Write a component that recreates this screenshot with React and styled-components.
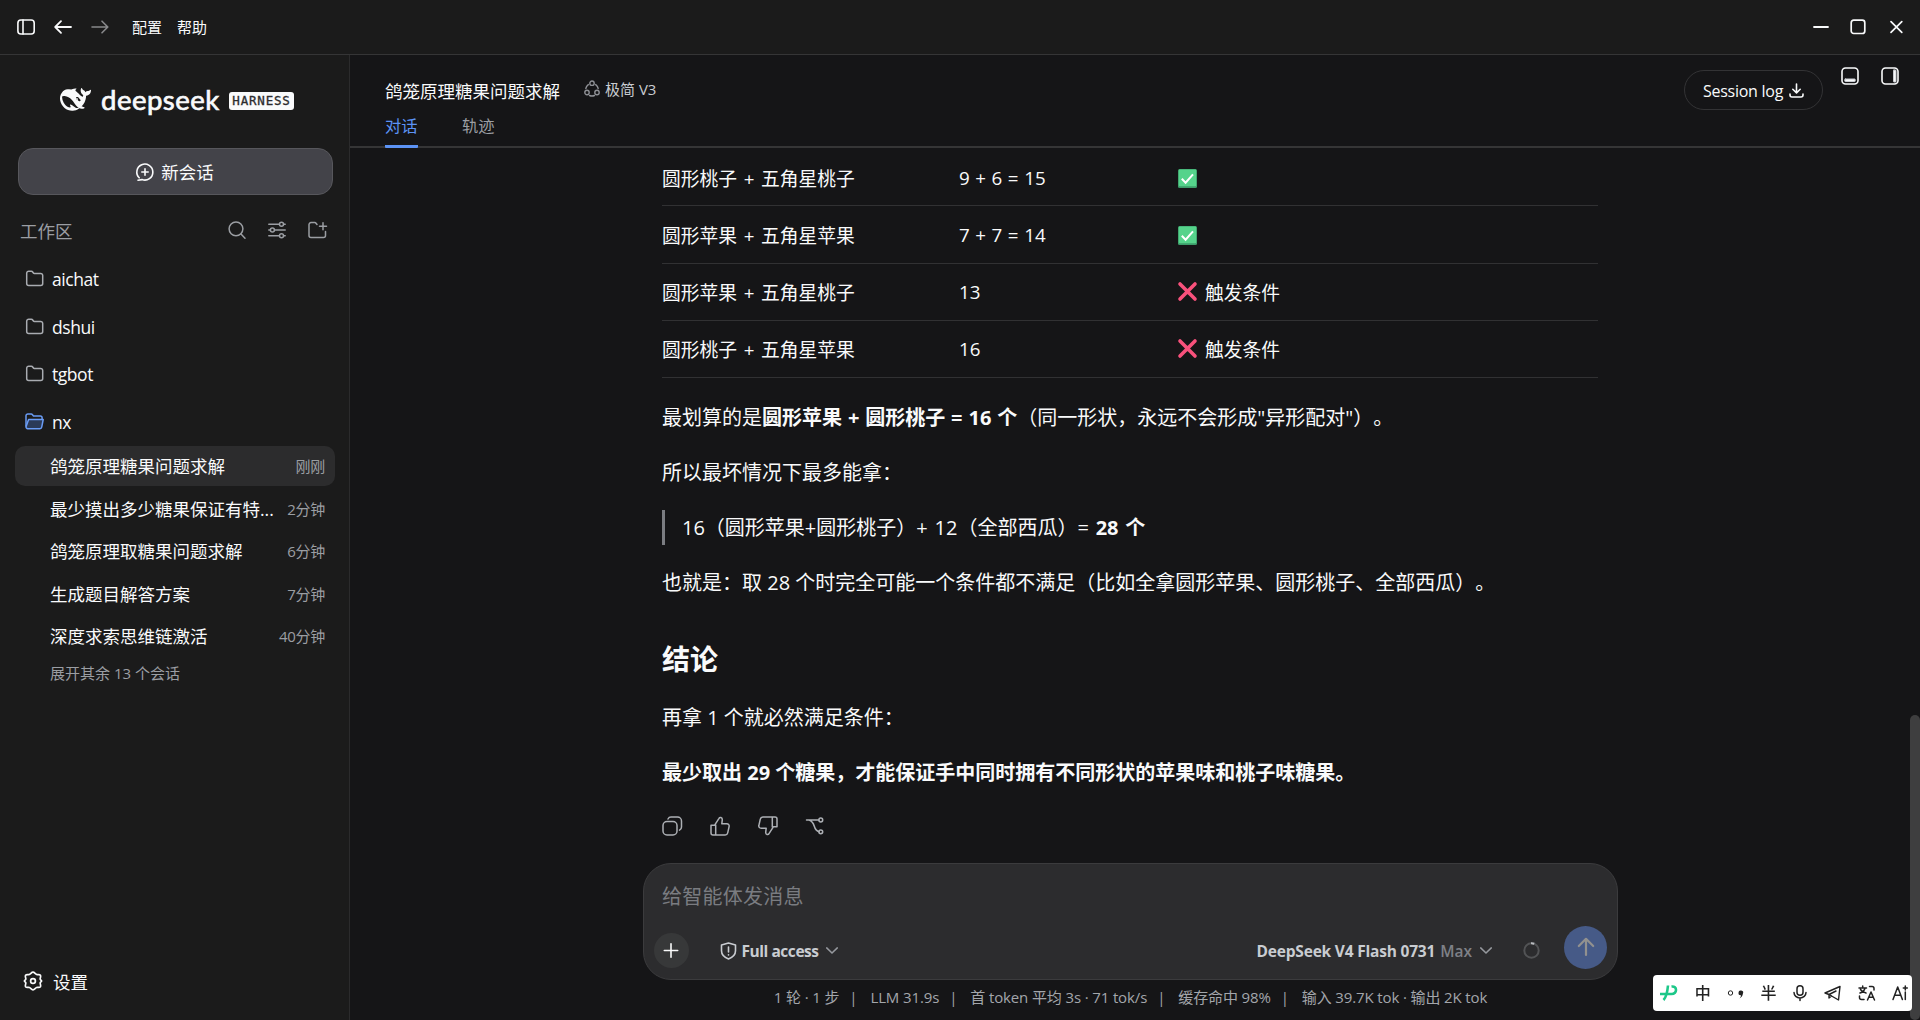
import React from "react";
import styled, { createGlobalStyle } from "styled-components";

const color = {
  main: "#151517",
  side: "#1b1b1b",
  line: "#353536",
  white: "#f9fafb",
  soft: "#c9ccd1",
  muted: "#9b9ea3",
  blue: "#5c93f5",
};

const GlobalStyle = createGlobalStyle`
  * {
    box-sizing: border-box;
  }

  body {
    margin: 0;
    background-color: ${color.main};
    color: ${color.white};
    font-family: "Open Sans", "Noto Sans CJK SC", sans-serif;
    font-size: 17.5px;
    text-spacing-trim: space-all;
    overflow: hidden;
  }

  svg {
    display: block;
    flex: none;
    overflow: visible;
  }
`;

const Window = styled.div`
  width: 1920px;
  height: 1020px;
  display: flex;
  flex-direction: column;
`;

const TitleBar = styled.header`
  height: 55px;
  flex: none;
  display: flex;
  align-items: center;
  padding: 0 17px;
  background-color: ${color.side};
  border-bottom: 1px solid ${color.line};
`;

const NavIcons = styled.div`
  display: flex;
  align-items: center;
  gap: 19px;
`;

const Menu = styled.nav`
  display: flex;
  gap: 15px;
  margin-left: 23px;
  font-size: 15px;
  line-height: 20px;
  flex: 1;
`;

const WindowButtons = styled.div`
  display: flex;
  align-items: center;
  gap: 21px;
`;

const Body = styled.div`
  flex: 1;
  min-height: 0;
  display: flex;
`;

const Sidebar = styled.aside`
  width: 350px;
  flex: none;
  display: flex;
  flex-direction: column;
  background-color: ${color.side};
  border-right: 1px solid #2b2b2c;
`;

const Brand = styled.div`
  height: 93px;
  flex: none;
  display: flex;
  align-items: center;
  padding: 0 0 4px 60px;
`;

const BrandName = styled.span`
  width: 120px;
  margin-left: 10px;
  font-family: Lato, sans-serif;
  font-size: 27.5px;
  line-height: 30px;
  letter-spacing: 0.5px;
  -webkit-text-stroke: 0.7px ${color.white};
`;

const BrandTag = styled.span`
  margin: 2px 0 0 8px;
  width: 65px;
  height: 18px;
  border-radius: 3px;
  background-color: ${color.white};
  color: #2b2b2d;
  font-family: "DejaVu Sans Mono", monospace;
  font-size: 12.5px;
  line-height: 18px;
  letter-spacing: 0.8px;
  text-align: center;
  -webkit-text-stroke: 0.3px #2b2b2d;
`;

const NewChat = styled.button`
  height: 47px;
  flex: none;
  margin: 0 16px 0 18px;
  padding: 0 1px 0 0;
  display: flex;
  align-items: center;
  justify-content: center;
  gap: 7px;
  background-color: #434349;
  border: 1px solid #57575c;
  border-radius: 15px;
  color: ${color.white};
  font: inherit;
`;

const WorkspaceHead = styled.div`
  height: 60px;
  flex: none;
  margin: 6px 0 -5.5px;
  padding: 0 22px 2px 20px;
  display: flex;
  align-items: center;
  gap: 22px;
  color: ${color.muted};

  span {
    flex: 1;
  }
`;

const Folder = styled.div`
  height: 47.5px;
  flex: none;
  padding-left: 25px;
  display: flex;
  align-items: center;
  gap: 8px;
  letter-spacing: -0.45px;

  svg {
    margin-bottom: 1px;
  }
`;

const Session = styled.div`
  height: 40px;
  flex: none;
  margin: 0 14px 2.5px 15px;
  padding: 0 10px 0 35px;
  display: flex;
  align-items: center;
  justify-content: space-between;
  border-radius: 10px;
  background-color: ${(props) => (props.$active ? "#2c2c2d" : "transparent")};
`;

const SessionTime = styled.span`
  color: ${color.muted};
  font-size: 15px;
  letter-spacing: -0.3px;
`;

const MoreSessions = styled.div`
  padding: 5px 0 0 50px;
  flex: 1;
  color: ${color.muted};
  font-size: 15px;
  line-height: 20px;
`;

const Settings = styled.div`
  height: 78px;
  flex: none;
  padding-left: 23px;
  display: flex;
  align-items: center;
  gap: 10px;
`;

const Main = styled.main`
  flex: 1;
  min-width: 0;
  display: flex;
  flex-direction: column;
`;

const ChatHeader = styled.div`
  height: 93px;
  flex: none;
  padding-left: 35px;
  display: flex;
  border-bottom: 2px solid ${color.line};
`;

const HeaderInfo = styled.div`
  flex: 1;
  display: flex;
  flex-direction: column;
  justify-content: space-between;
`;

const TitleRow = styled.div`
  height: 36px;
  margin-top: 17px;
  display: flex;
  align-items: center;
`;

const AgentTag = styled.span`
  margin: 0 0 4px 24px;
  display: flex;
  align-items: center;
  gap: 5px;
  color: ${color.soft};
  font-size: 15px;
`;

const Tabs = styled.div`
  display: flex;
  gap: 44px;
  margin-bottom: -2px;
`;

const Tab = styled.span`
  height: 34px;
  width: 33px;
  font-size: 16.25px;
  line-height: 25px;
  color: ${(props) => (props.$active ? color.blue : color.muted)};
  border-bottom: 3px solid ${(props) => (props.$active ? color.blue : "transparent")};
  border-radius: 1px;
`;

const LogButton = styled.button`
  width: 139px;
  height: 40px;
  margin: 15px 18px 0 0;
  padding: 1px 0 0;
  display: flex;
  align-items: center;
  justify-content: center;
  gap: 6px;
  background: none;
  border: 1px solid #333335;
  border-radius: 20px;
  color: ${color.white};
  font: inherit;
  font-size: 16px;
  letter-spacing: -0.25px;
`;

const PanelButtons = styled.div`
  display: flex;
  gap: 22px;
  padding: 12px 21px 0 0;
`;

const Scroller = styled.div`
  flex: 1;
  display: flex;
  justify-content: space-between;
  padding-left: 293px;
`;

const Column = styled.div`
  width: 975px;
  display: flex;
  flex-direction: column;
`;

const Answer = styled.article`
  height: 715px;
  flex: none;
  padding: 0 20px 0 19px;
  font-size: 20px;
`;

const Row = styled.div`
  height: 57px;
  padding-bottom: 2px;
  display: grid;
  grid-template-columns: 297px 219px 1fr;
  align-items: center;
  border-bottom: 1px solid #313133;
  font-size: 18.75px;

  &:first-child {
    height: 58px;
    padding: 2px 0 0;
  }

  &:nth-child(2) {
    height: 58px;
    padding: 0;
  }
`;

const Pair = styled.span`
  word-spacing: 1.8px;
`;

const Sum = styled.span`
  word-spacing: 0.7px;
`;

const Verdict = styled.span`
  display: flex;
  align-items: center;
  gap: 8px;

  svg {
    margin-top: 1px;
  }
`;

const Paragraph = styled.p`
  margin: ${(props) => props.$top || 20}px 0 0;
  line-height: 35px;
  white-space: nowrap;
  word-spacing: ${(props) => props.$words || 0}px;
`;

const Quote = styled.blockquote`
  margin: 20px 0 0;
  padding-left: 17px;
  border-left: 3px solid #7b7d82;
  line-height: 35px;
  word-spacing: 1.6px;
`;

const Heading = styled.h2`
  margin: 39px 0 0;
  padding-bottom: 1px;
  font-size: 28px;
  line-height: 40px;
`;

const Actions = styled.div`
  margin-top: 26px;
  display: flex;
  gap: 28px;
  color: #adb0b5;
`;

const Composer = styled.div`
  height: 117px;
  flex: none;
  padding: 17px 10px 0;
  display: flex;
  flex-direction: column;
  background-color: #2c2c2e;
  border: 1px solid #3b3b3d;
  border-radius: 28px;
`;

const Placeholder = styled.div`
  height: 34px;
  padding-left: 8px;
  color: #7a7c81;
  font-size: 20px;
  line-height: 32px;
  letter-spacing: 0.25px;
`;

const ComposerBar = styled.div`
  height: 44px;
  margin-top: 10px;
  display: flex;
  align-items: center;
  color: ${color.soft};
  font-size: 15.5px;
  font-weight: 700;
`;

const AddButton = styled.button`
  width: 35px;
  height: 35px;
  margin: 6px 31px 0 0;
  padding: 0;
  display: flex;
  align-items: center;
  justify-content: center;
  border: none;
  border-radius: 50%;
  background-color: #373839;
  color: ${color.white};
`;

const Picker = styled.span`
  display: flex;
  align-items: center;
  gap: ${(props) => props.$gap}px;
  margin-top: 7px;
  letter-spacing: ${(props) => props.$spacing}px;
  white-space: nowrap;
`;

const Effort = styled.span`
  color: #7f8187;
  font-weight: 600;
  letter-spacing: 0;
`;

const Spacer = styled.div`
  flex: 1;
`;

const UsageRing = styled.div`
  margin: 7px 24px 0 31px;
`;

const SendButton = styled.button`
  width: 43px;
  height: 43px;
  padding: 0;
  display: flex;
  align-items: center;
  justify-content: center;
  border: none;
  border-radius: 50%;
  background-color: #465a87;
  color: #92918f;
`;

const Stats = styled.footer`
  height: 36px;
  display: flex;
  justify-content: center;
  gap: 13px;
  color: #a3a6ab;
  font-size: 15px;
  line-height: 34px;
  letter-spacing: -0.13px;
  white-space: pre;
`;

const Divider = styled.span`
  margin-left: -3px;
`;

const ScrollThumb = styled.div`
  width: 10px;
  height: 305px;
  align-self: flex-end;
  border-radius: 5px;
  background-color: #3e3e3f;
`;

const InputMethodBar = styled.div`
  position: fixed;
  right: 8px;
  bottom: 9px;
  width: 259px;
  height: 36px;
  padding: 0 4px 0 7px;
  display: flex;
  align-items: center;
  justify-content: space-between;
  border-radius: 4px;
  background-color: #ffffff;
  color: #222222;
  font-size: 16px;
  font-weight: 500;
  line-height: 36px;
`;

const Icon = ({ w = 18, h = w, stroke = 1.5, children }) => (
  <svg
    width={w}
    height={h}
    viewBox={`0 0 ${w} ${h}`}
    fill="none"
    stroke="currentColor"
    strokeWidth={stroke}
    strokeLinecap="round"
    strokeLinejoin="round"
  >
    {children}
  </svg>
);

const Whale = () => (
  <svg width="31" height="31" viewBox="0 0 24 24" fill={color.white}>
    <path d="M23.748 4.482c-.254-.124-.364.113-.512.234-.051.039-.094.09-.137.136-.372.397-.806.657-1.373.626-.829-.046-1.537.214-2.163.848-.133-.782-.575-1.248-1.247-1.548-.352-.156-.708-.311-.955-.65-.172-.241-.219-.51-.305-.774-.055-.16-.11-.323-.293-.35-.2-.031-.278.136-.356.276-.313.572-.434 1.202-.422 1.84.027 1.436.633 2.58 1.838 3.393.137.093.172.187.129.323-.082.28-.18.552-.266.833-.055.179-.137.217-.329.14a5.526 5.526 0 01-1.736-1.18c-.857-.828-1.631-1.742-2.597-2.458a11.365 11.365 0 00-.689-.471c-.985-.957.13-1.743.388-1.836.27-.098.093-.432-.779-.428-.872.004-1.67.295-2.687.684a3.055 3.055 0 01-.465.137 9.597 9.597 0 00-2.883-.102c-1.885.21-3.39 1.102-4.497 2.623C.082 8.606-.231 10.684.152 12.85c.403 2.284 1.569 4.175 3.36 5.653 1.858 1.533 3.997 2.284 6.438 2.14 1.482-.085 3.133-.284 4.994-1.86.47.234.962.327 1.78.397.63.059 1.236-.03 1.705-.128.735-.156.684-.837.419-.961-2.155-1.004-1.682-.595-2.113-.926 1.096-1.296 2.746-2.642 3.392-7.003.05-.347.007-.565 0-.845-.004-.17.035-.237.23-.256a4.173 4.173 0 001.545-.475c1.396-.763 1.96-2.015 2.093-3.517.02-.23-.004-.467-.247-.588zM11.581 18c-2.089-1.642-3.102-2.183-3.52-2.16-.392.024-.321.471-.235.763.09.288.207.486.371.739.114.167.192.416-.113.603-.673.416-1.842-.14-1.897-.167-1.361-.802-2.5-1.86-3.301-3.307-.774-1.393-1.224-2.887-1.298-4.482-.02-.386.093-.522.477-.592a4.696 4.696 0 011.529-.039c2.132.312 3.946 1.265 5.468 2.774.868.86 1.525 1.887 2.202 2.891.72 1.066 1.494 2.082 2.48 2.914.348.292.625.514.891.677-.802.09-2.14.11-3.054-.614zm1-6.44a.306.306 0 01.415-.287.302.302 0 01.2.288.306.306 0 01-.31.307.303.303 0 01-.304-.308zm3.11 1.596c-.2.081-.399.151-.59.16a1.245 1.245 0 01-.798-.254c-.274-.23-.47-.358-.552-.758a1.73 1.73 0 01.016-.588c.07-.327-.008-.537-.239-.727-.187-.156-.426-.199-.688-.199a.559.559 0 01-.254-.078c-.11-.054-.2-.191-.114-.358.028-.054.16-.186.192-.21.356-.202.767-.136 1.146.016.352.144.618.408 1.001.782.391.451.462.576.685.914.176.265.336.537.445.848.067.195-.019.354-.25.452z" />
  </svg>
);

const FolderIcon = ({ open }) =>
  open ? (
    <svg width="19" height="17" viewBox="0 0 19 17" fill="none" stroke="#6a9cf5" strokeWidth="1.5" strokeLinejoin="round">
      <path d="M3.6 6.6h14.6l-1.5 7.6a1.8 1.8 0 0 1-1.8 1.5H2.700a1.800 1.800 0 0 1-1.700-2z" fill="#2b3a57" />
      <path d="M1 13.500V2.800A1.800 1.800 0 0 1 2.800 1h3.400c.6 0 1 .3 1.300.8l.8 1.100h7a1.800 1.800 0 0 1 1.800 1.800v1.800" />
    </svg>
  ) : (
    <svg width="19" height="17" viewBox="0 0 19 17" fill="none" stroke="#a9acb1" strokeWidth="1.5" strokeLinejoin="round">
      <path d="M1.700 3.200A2 2 0 0 1 3.700 1.200h2.700c.6 0 1 .3 1.300.8l.5.8c.3.4.7.6 1.200.6h6.300a2 2 0 0 1 2 2v8a2 2 0 0 1-2 2h-12a2 2 0 0 1-2-2z" />
    </svg>
  );

const Check = () => (
  <svg width="19" height="19" viewBox="0 0 19 19">
    <rect x="0" y="0" width="19" height="19" rx="1.5" fill="#3d9d6a" />
    <rect x="0.8" y="0.5" width="17.4" height="16.8" rx="1" fill="#55d38b" />
    <path d="M3.800 9.800l3.800 3.900 7.400-8.400" fill="none" stroke="#fff" strokeWidth="2" />
  </svg>
);

const Cross = () => (
  <svg width="19" height="19" viewBox="0 0 19 19" strokeLinecap="round" strokeWidth="3.6">
    <path d="M2 2l15 15M17 2L2 17" stroke="#f8517c" />
  </svg>
);

const ChevronIcon = styled.svg`
  width: 12px;
  height: 7px;
  margin-left: 3px;
  fill: none;
  stroke: #96999e;
  stroke-width: 1.5;
  stroke-linecap: round;
`;

const Chevron = () => (
  <ChevronIcon viewBox="0 0 12 7">
    <path d="M.7.900L6 6l5.300-5.100" />
  </ChevronIcon>
);

const sessions = [
  { title: "鸽笼原理糖果问题求解", time: "刚刚" },
  { title: "最少摸出多少糖果保证有特...", time: "2分钟" },
  { title: "鸽笼原理取糖果问题求解", time: "6分钟" },
  { title: "生成题目解答方案", time: "7分钟" },
  { title: "深度求索思维链激活", time: "40分钟" },
];

const rows = [
  { pair: "圆形桃子 + 五角星桃子", sum: "9 + 6 = 15", ok: true },
  { pair: "圆形苹果 + 五角星苹果", sum: "7 + 7 = 14", ok: true },
  { pair: "圆形苹果 + 五角星桃子", sum: "13", ok: false },
  { pair: "圆形桃子 + 五角星苹果", sum: "16", ok: false },
];

const stats = ["1 轮 · 1 步", "LLM 31.9s", "首 token 平均 3s · 71 tok/s", "缓存命中 98%", "输入 39.7K tok · 输出 2K tok"];

function TopBar() {
  return (
    <TitleBar>
      <NavIcons>
        <Icon w={18} h={16} stroke={1.6}>
          <rect x="0.9" y="1" width="16.3" height="14" rx="3" />
          <path d="M6 1v14" />
        </Icon>
        <Icon w={18} h={14} stroke={1.8}>
          <path d="M17 7H1.300M7 1.200L1.200 7 7 12.800" />
        </Icon>
        <svg width="18" height="14" viewBox="0 0 18 14" fill="none" stroke="#88898b" strokeWidth="1.6" strokeLinecap="round" strokeLinejoin="round">
          <path d="M1 7h15.700M11 1.200L16.800 7 11 12.800" />
        </svg>
      </NavIcons>
      <Menu>
        <span>配置</span>
        <span>帮助</span>
      </Menu>
      <WindowButtons>
        <Icon w={16} h={16} stroke={1.8}>
          <path d="M1 8h14" />
        </Icon>
        <Icon w={16} h={16} stroke={1.7}>
          <rect x="1.200" y="1.200" width="13.600" height="13.300" rx="2.500" />
        </Icon>
        <Icon w={16} h={16} stroke={1.7}>
          <path d="M4 2.600l10.800 10.800M14.800 2.600L4 13.400" />
        </Icon>
      </WindowButtons>
    </TitleBar>
  );
}

function SidePanel() {
  return (
    <Sidebar>
      <Brand>
        <Whale />
        <BrandName>deepseek</BrandName>
        <BrandTag>HARNESS</BrandTag>
      </Brand>
      <NewChat>
        <Icon w={18} stroke={1.6}>
          <path d="M3.200 14.800A8 8 0 1 1 6 16.600L2 17.200M9 5.800v6.400M5.800 9h6.400" />
        </Icon>
        新会话
      </NewChat>
      <WorkspaceHead>
        <span>工作区</span>
        <Icon w={18} stroke={1.5}>
          <circle cx="8" cy="7.800" r="6.900" />
          <path d="M13 13l4 4.200" />
        </Icon>
        <Icon w={18} stroke={1.5}>
          <path d="M.8 3.200h10.500M15.600 3.200h1.600M.8 9h1.400M6.600 9h10.600M.8 14.800h10.500M15.600 14.800h1.600" />
          <circle cx="13.500" cy="3.200" r="2" />
          <circle cx="4.400" cy="9" r="2" />
          <circle cx="13.500" cy="14.800" r="2" />
        </Icon>
        <Icon w={19} h={18} stroke={1.5}>
          <path d="M9 3.500l-1-1.300c-.3-.4-.7-.6-1.200-.6H3a2 2 0 0 0-2 2v11a2 2 0 0 0 2 2h12.500a2 2 0 0 0 2-2V10.500M15 1.800v7M11.500 5.300h7" />
        </Icon>
      </WorkspaceHead>
      {["aichat", "dshui", "tgbot", "nx"].map((name) => (
        <Folder key={name}>
          <FolderIcon open={name === "nx"} />
          {name}
        </Folder>
      ))}
      {sessions.map((item, i) => (
        <Session key={item.title} $active={i === 0}>
          {item.title}
          <SessionTime>{item.time}</SessionTime>
        </Session>
      ))}
      <MoreSessions>展开其余 13 个会话</MoreSessions>
      <Settings>
        <Icon w={20} stroke={1.7}>
          <path d="M10 1.200c1.500 0 2.300 1.900 3.600 2.300 1.300.3 2.900-.5 3.800.7.900 1.300-.4 2.600-.2 3.900.1.700 1.400 1.200 1.400 1.900s-1.300 1.200-1.400 1.900c-.2 1.300 1.100 2.600.2 3.900-.9 1.200-2.500.4-3.800.7-1.300.4-2.100 2.300-3.600 2.300s-2.300-1.900-3.600-2.300c-1.300-.3-2.900.5-3.800-.7-.9-1.300.4-2.600.2-3.900-.1-.7-1.400-1.200-1.400-1.900s1.300-1.200 1.400-1.900c.2-1.300-1.100-2.600-.2-3.900.9-1.200 2.500-.4 3.800-.7C7.700 3.100 8.500 1.200 10 1.200z" />
          <circle cx="10" cy="10" r="2.400" />
        </Icon>
        设置
      </Settings>
    </Sidebar>
  );
}

function Header() {
  return (
    <ChatHeader>
      <HeaderInfo>
        <TitleRow>
          鸽笼原理糖果问题求解
          <AgentTag>
            <svg width="16" height="17" viewBox="0 0 16 17" fill="none" stroke="#8e9095" strokeWidth="1.4" strokeLinecap="round">
              <circle cx="8" cy="3.200" r="2.200" />
              <circle cx="3" cy="12.500" r="2.200" />
              <circle cx="13" cy="12.500" r="2.200" />
              <path d="M4.300 4.600A6.500 6.500 0 0 0 1.800 8.500M11.700 4.600a6.500 6.500 0 0 1 2.500 3.900M5.500 15.500a6.500 6.500 0 0 0 5 0" />
            </svg>
            极简 V3
          </AgentTag>
        </TitleRow>
        <Tabs>
          <Tab $active>对话</Tab>
          <Tab>轨迹</Tab>
        </Tabs>
      </HeaderInfo>
      <LogButton>
        Session log
        <Icon w={15} h={15} stroke={1.6}>
          <path d="M7.500 1v8.500M3.800 6.300l3.700 3.600 3.700-3.600M1 11v1a2 2 0 0 0 2 2h9a2 2 0 0 0 2-2v-1" />
        </Icon>
      </LogButton>
      <PanelButtons>
        <Icon w={18} stroke={1.6}>
          <rect x="1" y="1" width="16" height="16" rx="3.500" />
          <rect x="3.800" y="12" width="10.400" height="2.500" rx="0.500" fill="currentColor" stroke="#c9ccd1" strokeWidth="1" />
        </Icon>
        <Icon w={18} stroke={1.6}>
          <rect x="1" y="1" width="16" height="16" rx="3.500" />
          <rect x="12.500" y="3" width="2.500" height="12" rx="0.500" fill="currentColor" stroke="#c9ccd1" strokeWidth="1" />
        </Icon>
      </PanelButtons>
    </ChatHeader>
  );
}

function Message() {
  return (
    <Answer>
      {rows.map((row) => (
        <Row key={row.pair}>
          <Pair>{row.pair}</Pair>
          <Sum>{row.sum}</Sum>
          <Verdict>
            {row.ok ? <Check /> : <Cross />}
            {!row.ok && "触发条件"}
          </Verdict>
        </Row>
      ))}
      <Paragraph $top={22} $words={0.7}>
        最划算的是<b>圆形苹果 + 圆形桃子 = 16 个</b>（同一形状，永远不会形成"异形配对"）。
      </Paragraph>
      <Paragraph>所以最坏情况下最多能拿：</Paragraph>
      <Quote>
        16（圆形苹果+圆形桃子）+ 12（全部西瓜）= <b>28 个</b>
      </Quote>
      <Paragraph>也就是：取 28 个时完全可能一个条件都不满足（比如全拿圆形苹果、圆形桃子、全部西瓜）。</Paragraph>
      <Heading>结论</Heading>
      <Paragraph>再拿 1 个就必然满足条件：</Paragraph>
      <Paragraph>
        <b>最少取出 29 个糖果，才能保证手中同时拥有不同形状的苹果味和桃子味糖果。</b>
      </Paragraph>
      <Actions>
        <Icon w={20} stroke={1.5}>
          <rect x="1" y="5.500" width="14" height="13.500" rx="4" />
          <path d="M6 3c.6-1.200 1.600-1.900 3-1.900h6.500a4 4 0 0 1 4 4V11c0 1.500-.8 2.600-2 3.200" />
        </Icon>
        <Icon w={20} stroke={1.5}>
          <path d="M1 9.300h3.500L9 2.300c.7-1.300 3.400-1.300 3.300 1.400l-.5 4.100h5c1.700 0 2.700 1.300 2.300 2.900l-1.400 6.200c-.3 1.300-1.200 2.100-2.500 2.100H3a2 2 0 0 1-2-2zM5.700 9v9.800" />
        </Icon>
        <Icon w={20} stroke={1.5}>
          <path d="M19 10.700h-3.500L11 17.700c-.7 1.300-3.400 1.300-3.300-1.400l.5-4.100h-5C1.500 12.200.5 10.900.9 9.300l1.400-6.200C2.600 1.800 3.500 1 4.800 1H17a2 2 0 0 1 2 2zM14.300 11V1.200" />
        </Icon>
        <Icon w={20} stroke={1.5}>
          <path d="M.5 4h12.300M3 4c3 1 4.500 3.500 5.300 6.300.8 2.800 2.200 4.800 4.800 5.500" />
          <circle cx="14.800" cy="4" r="1.900" />
          <circle cx="14.800" cy="15.800" r="1.900" />
        </Icon>
      </Actions>
    </Answer>
  );
}

function Prompt() {
  return (
    <Composer>
      <Placeholder>给智能体发消息</Placeholder>
      <ComposerBar>
        <AddButton>
          <Icon w={15} stroke={1.6}>
            <path d="M7 .8v13.400M.3 7.500h13.400" />
          </Icon>
        </AddButton>
        <Picker $gap={4.5} $spacing={-0.45}>
          <Icon w={17} h={18} stroke={1.6}>
            <path d="M8.500 1.100l7 2v5.700c0 4-2.800 6.600-7 8.100-4.200-1.500-7-4.100-7-8.100V3.100zM8.500 5v5M8.500 12.700v.2" />
          </Icon>
          Full access
          <Chevron />
        </Picker>
        <Spacer />
        <Picker $gap={5} $spacing={-0.2}>
          DeepSeek V4 Flash 0731
          <Effort>Max</Effort>
          <Chevron />
        </Picker>
        <UsageRing>
          <svg width="17" height="17" viewBox="0 0 17 17" fill="none" strokeWidth="2">
            <circle cx="8.500" cy="8.500" r="7.200" stroke="#525355" />
            <path d="M8 1.300a7.200 7.200 0 0 1 3.200.5" stroke="#b9bcc0" />
          </svg>
        </UsageRing>
        <SendButton>
          <Icon w={18} h={20} stroke={2.2}>
            <path d="M9 18V2M1.800 9L9 1.800 16.200 9" />
          </Icon>
        </SendButton>
      </ComposerBar>
    </Composer>
  );
}

function InputMethod() {
  return (
    <InputMethodBar>
      <svg width="18" height="16" viewBox="0 0 18 16" fill="none" stroke="#1dc889" strokeWidth="2.6">
        <path d="M8 .5C7.500 6 6.500 12 3.500 15M11.500 1.500c6-.8 6 7.500 0 7.500H0" />
      </svg>
      <span>中</span>
      <svg width="16" height="16" viewBox="0 0 16 16">
        <circle cx="2.500" cy="8" r="2.200" fill="none" stroke="#222" />
        <path d="M10.500 7.800a2.300 2.300 0 1 1 4.400 1c-.3 2.200-1.400 3.600-3.400 4.700 1.200-1.300 1.500-2.200 1.400-3.200a2.300 2.300 0 0 1-2.400-2.500z" fill="#222" />
      </svg>
      <span>半</span>
      <Icon w={14} h={16} stroke={1.5}>
        <rect x="4" y="0.8" width="6" height="9.500" rx="3" />
        <path d="M1 7.500a6 5.500 0 0 0 12 0M7 13v2.500" />
      </Icon>
      <Icon w={17} h={16} stroke={1.4}>
        <path d="M16 1.500L1 8l4 1.500L14.500 15zM5 9.500l7-3.500M5 9.500v3.500l2.500-2" />
      </Icon>
      <Icon w={17} h={16} stroke={1.5}>
        <path d="M1 3h7.500M4.700 1v2M2 8c3-1 4.500-2.500 5-5M2.500 4.500C4 7 5.500 7.500 8 8M9.500 15L13 7l3.500 8M10.800 12.300h4.600M11.500 1.500H14a2 2 0 0 1 2 2V5M1.500 11v1.500a2 2 0 0 0 2 2H6" />
      </Icon>
      <Icon w={16} h={16} stroke={1.5}>
        <path d="M1 14.500L5.700 2l4.700 12.500M2.700 10.300h6M13.300 7v7.500M13.300 1v4M11.300 3h4" />
      </Icon>
    </InputMethodBar>
  );
}

export default function App() {
  return (
    <Window>
      <GlobalStyle />
      <TopBar />
      <Body>
        <SidePanel />
        <Main>
          <Header />
          <Scroller>
            <Column>
              <Message />
              <Prompt />
              <Stats>
                {stats.map((text, i) => (
                  <React.Fragment key={text}>
                    {i > 0 && <Divider>|</Divider>}
                    <span>{text}</span>
                  </React.Fragment>
                ))}
              </Stats>
            </Column>
            <ScrollThumb />
          </Scroller>
        </Main>
      </Body>
      <InputMethod />
    </Window>
  );
}
